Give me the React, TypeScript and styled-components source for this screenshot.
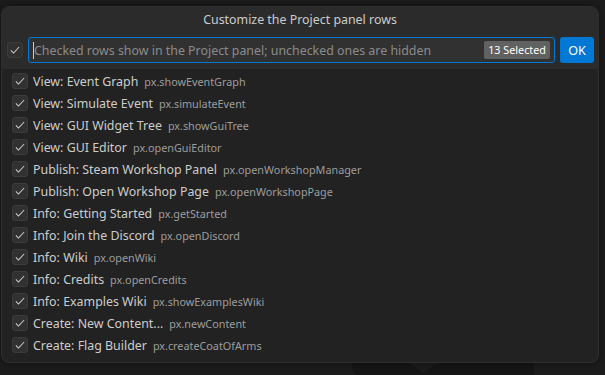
import React from 'react';
import styled, { createGlobalStyle } from 'styled-components';

const GlobalStyle = createGlobalStyle`
  html, body {
    margin: 0;
    padding: 0;
    background: #1c1c1c;
    overflow: hidden;
  }
  body {
    font-family: "Noto Sans", "Open Sans", sans-serif;
  }
`;

const Page = styled.div`
  position: relative;
  width: 605px;
  height: 375px;
  padding: 6px 6px 0 1px;
  box-sizing: border-box;
`;

// editor letterpress peeking out below the dialog
const Watermark = styled.svg`
  position: absolute;
  left: 352px;
  top: 360px;
`;

const Dialog = styled.div`
  position: relative;
  width: 598px;
  background: #222222;
  border: 1px solid #2f2f2f;
  border-radius: 8px;
  box-shadow: 0 0 8px rgba(0, 0, 0, 0.45);
  box-sizing: border-box;
  overflow: hidden;
  padding-bottom: 6px;
`;

const Title = styled.div`
  height: 25px;
  display: flex;
  align-items: center;
  justify-content: center;
  background: #2b2b2b;
  color: #cccccc;
  font-size: 12.4px;
  padding-bottom: 1px;
  box-sizing: border-box;
`;

const InputRow = styled.div`
  display: flex;
  align-items: center;
  gap: 5px;
  padding: 5px 4px 6px 5px;
  background: #2b2b2b;
`;

const Box = styled.div`
  width: 16px;
  height: 16px;
  flex: none;
  border: 1px solid #3c3c3c;
  border-radius: 3px;
  background: #313131;
  box-sizing: border-box;
  display: flex;
  align-items: center;
  justify-content: center;
`;

const Input = styled.div`
  flex: 1;
  height: 26px;
  display: flex;
  align-items: center;
  border: 1px solid #0078d4;
  border-radius: 3px;
  background: #313131;
  box-sizing: border-box;
  padding: 0 4px 0 4px;
`;

const Caret = styled.span`
  width: 1px;
  height: 17px;
  background: #cccccc;
  flex: none;
`;

const Placeholder = styled.span`
  flex: 1;
  color: #8b8b8b;
  font-size: 12.4px;
  white-space: nowrap;
`;

const Count = styled.span`
  background: #616161;
  color: #ffffff;
  font-size: 10.8px;
  border-radius: 2px;
  padding: 2px 4px;
  line-height: 14px;
`;

const OkButton = styled.button`
  width: 34px;
  height: 26px;
  flex: none;
  border: none;
  border-radius: 3px;
  background: #0078d4;
  color: #ffffff;
  font-family: inherit;
  font-size: 12.6px;
  padding: 0;
`;

const List = styled.div`
  display: flex;
  flex-direction: column;
  padding-top: 1px;
`;

const Row = styled.div`
  height: 22px;
  display: flex;
  align-items: center;
  padding-left: 10px;
  gap: 5px;
  white-space: nowrap;
`;

const Label = styled.span`
  color: #cccccc;
  font-size: 12.4px;
  margin-right: 1px;
`;

const Desc = styled.span`
  color: #9d9d9d;
  font-size: 10.8px;
`;

const Check = () => (
  <svg width="12" height="12" viewBox="0 0 16 16">
    <path d="M2.5 8.5 L6 12 L13.5 4" fill="none" stroke="#cccccc" strokeWidth="1.4" />
  </svg>
);

const rows: [string, string][] = [
  ['View: Event Graph', 'px.showEventGraph'],
  ['View: Simulate Event', 'px.simulateEvent'],
  ['View: GUI Widget Tree', 'px.showGuiTree'],
  ['View: GUI Editor', 'px.openGuiEditor'],
  ['Publish: Steam Workshop Panel', 'px.openWorkshopManager'],
  ['Publish: Open Workshop Page', 'px.openWorkshopPage'],
  ['Info: Getting Started', 'px.getStarted'],
  ['Info: Join the Discord', 'px.openDiscord'],
  ['Info: Wiki', 'px.openWiki'],
  ['Info: Credits', 'px.openCredits'],
  ['Info: Examples Wiki', 'px.showExamplesWiki'],
  ['Create: New Content...', 'px.newContent'],
  ['Create: Flag Builder', 'px.createCoatOfArms'],
];

const App: React.FC = () => {
  return (
    <Page>
      <GlobalStyle />
      <Watermark width="182" height="15" viewBox="0 0 182 15">
        <path d="M0 0 H178 L182 4 V15 H8 Q0 15 0 8 Z" fill="#161616" />
        <path d="M53 0 H90 L71 13 Z" fill="#1c1c1c" />
      </Watermark>
      <Dialog>
        <Title>Customize the Project panel rows</Title>
        <InputRow>
          <Box>
            <Check />
          </Box>
          <Input>
            <Caret />
            <Placeholder>Checked rows show in the Project panel; unchecked ones are hidden</Placeholder>
            <Count>13 Selected</Count>
          </Input>
          <OkButton>OK</OkButton>
        </InputRow>
        <List>
          {rows.map(([label, cmd]) => (
            <Row key={cmd}>
              <Box>
                <Check />
              </Box>
              <Label>{label}</Label>
              <Desc>{cmd}</Desc>
            </Row>
          ))}
        </List>
      </Dialog>
    </Page>
  );
};

export default App;
